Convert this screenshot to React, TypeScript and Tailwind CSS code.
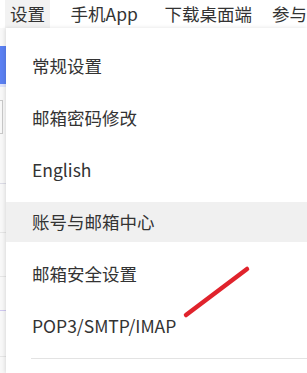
import React from "react";

const FONT = '"Microsoft YaHei", "Noto Sans CJK SC", "Noto Sans", sans-serif';

const menuItems = [
  { label: "常规设置", hover: false },
  { label: "邮箱密码修改", hover: false },
  { label: "English", hover: false },
  { label: "账号与邮箱中心", hover: true },
  { label: "邮箱安全设置", hover: false },
  { label: "POP3/SMTP/IMAP", hover: false },
];

const App: React.FC = () => {
  return (
    <div
      className="relative w-[307px] h-[373px] overflow-hidden bg-white text-[#333]"
      style={{ fontFamily: FONT }}
    >
      {/* top nav */}
      <div className="flex h-[28px] items-stretch pl-[5px] whitespace-nowrap text-[17.5px] leading-none">
        <div className="w-[46px] flex items-center justify-center bg-[#f2f2f2]">
          设置
        </div>
        <div className="w-[21px]" />
        <div className="w-[96px] flex items-center">手机App</div>
        <div className="w-[110px] flex items-center">下载桌面端</div>
        <div className="flex-1 flex items-center">参与</div>
      </div>

      <div className="flex h-[345px]">
        {/* page behind the menu */}
        <div className="w-[6px] shrink-0 flex flex-col bg-[#f8f8f8]">
          <div className="h-[18px]" />
          <div className="h-[38px] bg-[#5b80f2]" />
          <div className="h-[3px] bg-[#dfe3fb]" />
          <div className="h-[13px]" />
          <div className="h-[34px] border-y border-r border-[#c9c9c9] w-[3px]" />
          <div className="h-[50px] border-b border-[#dcdce6]" />
          <div className="h-[49px] border-b border-[#e6e6e6]" />
          <div className="h-[44px] border-b border-[#e6e6e6]" />
          <div className="h-[34px] border-b border-[#cfc8f0]" />
          <div className="h-[46px] border-b border-[#e6e6e6]" />
        </div>

        {/* dropdown menu */}
        <div className="flex-1 bg-white shadow-[-1px_0_4px_rgba(0,0,0,0.12)] pt-[18px]">
          {menuItems.map((item) => (
            <div
              key={item.label}
              className={`h-[40px] mb-[12px] flex items-center pl-[26px] text-[17.5px] leading-none ${
                item.hover ? "bg-[#f0f0f0]" : ""
              }`}
            >
              {item.label}
            </div>
          ))}
          <div className="ml-[25px] border-t border-[#e3e3e3] mt-[2px]" />
        </div>
      </div>

      {/* red annotation stroke */}
      <svg
        className="absolute left-0 top-0 pointer-events-none"
        width="307"
        height="373"
        viewBox="0 0 307 373"
      >
        <line
          x1="186"
          y1="315"
          x2="247"
          y2="269"
          stroke="#e0232c"
          strokeWidth="4.5"
          strokeLinecap="round"
        />
      </svg>
    </div>
  );
};

export default App;
